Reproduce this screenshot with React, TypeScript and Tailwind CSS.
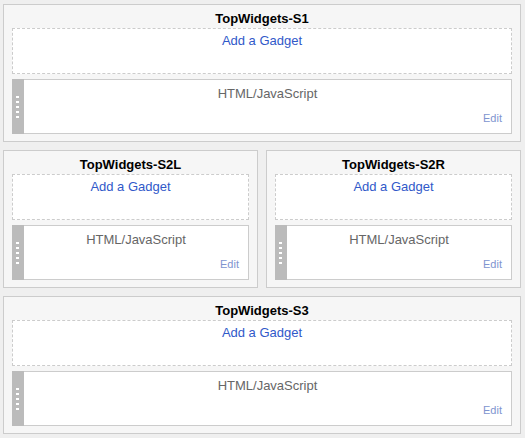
const Widget = () => (
  <div className="flex h-[55px]">
    <div className="flex w-[12px] flex-col justify-center gap-[3px] bg-[#bbbbbb] pl-[4px]">
      {[0, 1, 2, 3, 4].map((i) => (
        <div key={i} className="h-[2px] w-[3px] bg-white" />
      ))}
    </div>
    <div className="flex flex-1 flex-col border-y border-r border-[#cccccc] bg-white">
      <div className="pt-[6px] text-center text-[13px] leading-[15px] text-[#666666]">
        HTML/JavaScript
      </div>
      <a className="mt-auto self-end pb-[8px] pr-[9px] text-[11px] leading-[13px] text-[#8094cf]">
        Edit
      </a>
    </div>
  </div>
);

const Section = ({ title, className }: { title: string; className?: string }) => (
  <div
    className={`flex h-[138px] flex-col border border-[#cccccc] bg-[#f6f6f6] px-[8px] ${className ?? ""}`}
  >
    <div className="pb-[2px] pt-[6px] text-center text-[13px] font-bold leading-[15px] text-black">
      {title}
    </div>
    <div className="h-[46px] border border-dashed border-[#cccccc] bg-white pt-[4px] text-center text-[13px] leading-[15px] text-[#3159c9]">
      Add a Gadget
    </div>
    <div className="mt-[5px]">
      <Widget />
    </div>
  </div>
);

export default function App() {
  return (
    <div className="h-[438px] w-[525px] bg-[#efefef] pl-[3px] pt-[4px] font-['Liberation_Sans',Arial,sans-serif]">
      <div className="flex w-[518px] flex-col gap-[8px]">
        <Section title="TopWidgets-S1" />
        <div className="flex gap-[8px]">
          <Section title="TopWidgets-S2L" className="flex-1" />
          <Section title="TopWidgets-S2R" className="flex-1" />
        </div>
        <Section title="TopWidgets-S3" />
      </div>
    </div>
  );
}
